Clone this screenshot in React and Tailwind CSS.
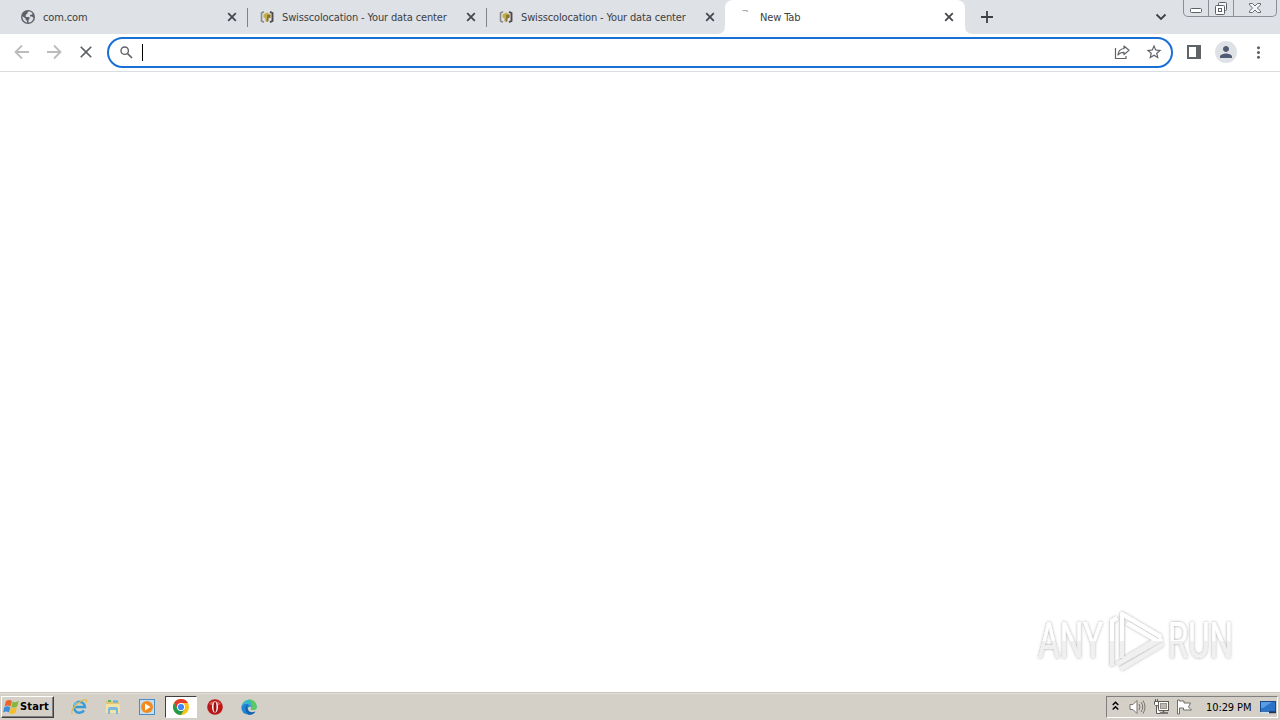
import { MdClose, MdMoreVert, MdPerson, MdStarBorder } from "react-icons/md";

const TABS = [
  { title: "com.com", icon: "globe" },
  { title: "Swisscolocation - Your data center", icon: "swiss" },
  { title: "Swisscolocation - Your data center", icon: "swiss" },
  { title: "New Tab", icon: "loading", active: true },
];

const GlobeIcon = () => (
  <svg width="14" height="14" viewBox="0 0 14 14">
    <circle cx="7" cy="7" r="7" fill="#5f6368" />
    <path d="M8 1.200Q6 2 6.500 3.500L5 4.500v1.300H3.800L5.500 7h3v2l-1 1v2.600A5.700 5.700 0 0 0 12.500 8L11 6.500H9V5l2-.5.500-1.200A6 6 0 0 0 8 1.200z" fill="#dee1e6" />
    <path d="M1.400 6.300A5.700 5.700 0 0 0 6 12.600V11L4.500 9.500V8.600z" fill="#dee1e6" />
  </svg>
);

const SwissIcon = () => (
  <svg width="14" height="14" viewBox="0 0 14 14" fill="none">
    <path d="M4 1.800L1.500 3v8L4 12.200" stroke="#8d8782" strokeWidth="1.500" />
    <path d="M10 1.800L12.500 3v8L10 12.200" stroke="#4e4a4c" strokeWidth="1.900" />
    <path d="M7 2.500L3.500 4.500v3L7 9l3.500-1.500v-3z" fill="#c3ae4c" />
    <path d="M7 5v7l1.500-1V8.500l2-1v-3z" fill="#8b7430" />
    <path d="M5.500 8L7 8.700V12l-1.500-1z" fill="#b19a38" />
  </svg>
);

const LoadingIcon = () => (
  <svg width="14" height="14" viewBox="0 0 14 14" fill="none">
    <path d="M4.500 .5Q8 0 10 1.500" stroke="#a9adb2" strokeWidth="1.400" />
  </svg>
);

const TabIcon = ({ icon }) => {
  if (icon === "globe") {
    return <GlobeIcon />;
  }
  if (icon === "swiss") {
    return <SwissIcon />;
  }
  return <LoadingIcon />;
};

const CloseIcon = () => (
  <svg width="10" height="10" viewBox="0 0 10 10">
    <path d="M1.200 1.200l7.600 7.600M8.800 1.200L1.200 8.800" stroke="#45494e" strokeWidth="1.800" />
  </svg>
);

const Tab = ({ title, icon, active, divider }) => (
  <div
    className={`relative flex h-[34px] shrink-0 items-center pl-[13px] ${
      active ? "w-[240px] rounded-t-lg bg-white" : "w-[239px]"
    }`}
  >
    {active && (
      <>
        <svg className="absolute bottom-0 -left-2" width="8" height="8">
          <path d="M8 0v8H0Q8 8 8 0z" fill="#fff" />
        </svg>
        <svg className="absolute -right-2 bottom-0" width="8" height="8">
          <path d="M0 0v8h8Q0 8 0 0z" fill="#fff" />
        </svg>
      </>
    )}
    <div className="flex size-[14px] shrink-0">
      <TabIcon icon={icon} />
    </div>
    <span className="ml-2 w-[184px] whitespace-nowrap pt-[2px] text-[11px] leading-[14px] tracking-[-0.14px] text-[#3c4043]">
      {title}
    </span>
    <CloseIcon />
    {divider && <div className="-mr-px ml-auto h-[19px] w-px shrink-0 bg-[#808489]" />}
  </div>
);

const WindowButtons = () => (
  <div className="flex h-[17px] w-[94px] self-start rounded-b-[5px] border border-t-0 border-[#8b8e94]">
    <div className="flex w-[25px] items-center justify-center border-r border-[#8b8e94]">
      <svg width="14" height="16" viewBox="0 0 14 16" fill="none">
        <rect x="1.500" y="8.500" width="11" height="4" rx="1" fill="#fff" stroke="#5c5f66" />
      </svg>
    </div>
    <div className="flex w-[25px] items-center justify-center border-r border-[#8b8e94]">
      <svg width="14" height="16" viewBox="0 0 14 16" fill="none" stroke="#5c5f66">
        <rect x="4.500" y="2.500" width="8" height="8" rx="1" fill="#f4f5f7" />
        <rect x="1.500" y="5.500" width="9" height="9" rx="1" fill="#fff" />
        <rect x="4.500" y="8.500" width="3" height="3" />
      </svg>
    </div>
    <div className="flex flex-1 items-center justify-center">
      <svg width="14" height="16" viewBox="0 0 14 16">
        <path
          d="M1.500 3.500h3L7 6l2.500-2.500h3v1.500L9.300 8l3.200 3v1.500h-3L7 10l-2.500 2.500h-3V11l3.200-3-3.200-3z"
          fill="#f4f5f7"
          stroke="#5c5f66"
          strokeWidth=".9"
        />
      </svg>
    </div>
  </div>
);

const TabStrip = () => (
  <div className="flex h-[34px] items-center bg-[#dee1e6] pr-[3px] pl-2">
    {TABS.map((tab, i) => (
      <Tab key={i} {...tab} divider={i < 2} />
    ))}
    <svg className="ml-4" width="12" height="12" viewBox="0 0 12 12">
      <path d="M6 0v12M0 6h12" stroke="#3c4043" strokeWidth="1.800" />
    </svg>
    <svg className="mr-[16px] ml-auto" width="12" height="8" viewBox="0 0 12 8" fill="none">
      <path d="M1.500 1.500L6 6l4.500-4.500" stroke="#3c4043" strokeWidth="1.800" />
    </svg>
    <WindowButtons />
  </div>
);

const ArrowIcon = ({ className }) => (
  <svg className={className} width="16" height="16" viewBox="0 0 16 16" fill="none">
    <path d="M15 8H2M8 1.500L1.500 8 8 14.500" stroke="#babcbe" strokeWidth="1.800" />
  </svg>
);

const Toolbar = () => (
  <div className="flex h-[38px] items-center border-b border-[#dadce0] bg-white pl-[14px]">
    <div className="flex w-[93px] shrink-0 items-center gap-4 pb-px">
      <ArrowIcon />
      <ArrowIcon className="rotate-180" />
      <MdClose className="-ml-[2px] size-[20px] shrink-0 text-[#5f6368]" />
    </div>
    <div className="flex h-[31px] w-[1066px] shrink-0 items-center rounded-full border-2 border-[#1a6fd4] pr-2 pl-[11px]">
      <svg className="mb-px" width="13" height="13" viewBox="0 0 13 13" fill="none" stroke="#5f6368">
        <circle cx="4.700" cy="4.700" r="3.700" strokeWidth="1.400" />
        <path d="M7.500 7.500l4.500 4.500" strokeWidth="1.700" />
      </svg>
      <div className="ml-[9px] h-[17px] w-px bg-black" />
      <svg className="mb-px ml-auto" width="16" height="16" viewBox="0 0 16 16" fill="none" stroke="#5f6368">
        <path d="M1.500 4v10.500h10.500V12" strokeWidth="1.200" />
        <path
          d="M10 2l5 4.300-5 4.300V8.300Q6 8.300 4 11 4.500 5 10 4.500z"
          strokeWidth="1.200"
          strokeLinejoin="round"
        />
      </svg>
      <MdStarBorder className="mb-px ml-[15px] size-[18px] text-[#5f6368]" />
    </div>
    <svg className="mb-px ml-[14px]" width="14" height="14" viewBox="0 0 14 14">
      <path d="M0 0h14v14H0zM2 2v10h7V2z" fill="#5f6368" fillRule="evenodd" />
    </svg>
    <div className="mb-px ml-[14px] flex size-[22px] items-center justify-center rounded-full bg-[#dee1e6]">
      <MdPerson className="size-[18px] text-[#4f5b73]" />
    </div>
    <MdMoreVert className="ml-[12px] size-[19px] shrink-0 text-[#5f6368]" />
  </div>
);

const Watermark = () => (
  <svg
    className="mb-[13px]"
    width="250"
    height="74"
    viewBox="0 0 250 74"
    fontFamily="Roboto, 'Liberation Sans', sans-serif"
    fontSize="50"
  >
    <defs>
      <linearGradient id="fade" x1="0" y1="0" x2="0" y2="74" gradientUnits="userSpaceOnUse">
        <stop offset="0.490" stopColor="#fff" />
        <stop offset="0.490" stopColor="#f0f0f0" />
      </linearGradient>
      <filter id="glow" x="-10%" y="-20%" width="120%" height="140%">
        <feDropShadow dx="0" dy="0" stdDeviation="1.600" floodColor="#000" floodOpacity=".36" />
      </filter>
    </defs>
    <g filter="url(#glow)" fill="url(#fade)">
      <text x="8" y="53" textLength="65" lengthAdjust="spacingAndGlyphs">
        ANY
      </text>
      <text x="138" y="53" textLength="65" lengthAdjust="spacingAndGlyphs">
        RUN
      </text>
    </g>
    <g filter="url(#glow)" fill="none" stroke="url(#fade)" strokeWidth="4" strokeLinejoin="round">
      <path d="M92 53V9L131 32" />
      <path d="M97 18L126 35 93 55" />
      <path d="M87 13l-5 3V61" />
      <path d="M87 59L132 34" />
      <path d="M91 64L133 39" />
    </g>
  </svg>
);

const StartButton = () => (
  <div className="flex h-[22px] w-[53px] items-center border border-t-white border-r-[#404040] border-b-[#404040] border-l-white bg-[#d4d0c8] pl-px shadow-[inset_-1px_-1px_#808080]">
    <svg className="shrink-0" width="17" height="16" viewBox="0 0 17 16">
      <path d="M3 2q3-2 6 0L7.500 7.500q-3-2-6 0z" fill="#e9652b" />
      <path d="M9.700 2.500q3 1.500 6-.5l-1.500 5.500q-3 2-6 .5z" fill="#83b83c" />
      <path d="M1.300 8.200q3-2 6 0L6 13.500q-3-2-6 0z" fill="#3b8ed8" />
      <path d="M8 8.800q3 1.500 6-.5l-1.500 5.500q-3 2-6 .5z" fill="#f6bd25" />
    </svg>
    <span className="pt-px text-[11px] leading-[14px] font-bold tracking-[0.15px] text-black">
      Start
    </span>
  </div>
);

const IeIcon = () => (
  <svg width="18" height="18" viewBox="0 0 18 18" fill="none">
    <path d="M14 12.500A5.500 5.500 0 1 1 15 9H4.500" stroke="#389bd8" strokeWidth="2.400" />
    <path d="M4.500 8.200q0-3 3-4" stroke="#7dcaf0" strokeWidth="1.200" />
    <path d="M2.500 16C-1 14 7 4 14 1.800q4-1 2 3" stroke="#e0bd50" strokeWidth="1.300" />
  </svg>
);

const ExplorerIcon = () => (
  <svg width="18" height="18" viewBox="0 0 18 18">
    <path d="M2 3h5l1 1h7v11H2z" fill="#e0c577" />
    <path d="M4 2h3v2H4z" fill="#5eb85b" />
    <path d="M9 2.500h5v2H9z" fill="#5aaee1" />
    <path d="M2 6h13l1 2v7H2z" fill="#f2e2a6" />
    <path d="M4 16v-5q0-2 2-2h6q2 0 2 2v5h-2v-4H6v4z" fill="#79b9df" />
  </svg>
);

const PlayerIcon = () => (
  <svg width="18" height="18" viewBox="0 0 18 18">
    <rect x="1.500" y="1.500" width="15" height="15" fill="#c4def3" stroke="#4c8cc5" />
    <circle cx="9" cy="9" r="6" fill="#f28b1c" />
    <path d="M7 5.500v7L12.500 9z" fill="#fff" />
  </svg>
);

const ChromeIcon = () => (
  <svg width="16" height="16" viewBox="0 0 16 16">
    <circle cx="8" cy="8" r="8" fill="#fbc116" />
    <path d="M8 8V4H14.930A8 8 0 0 0 1.070 4L4.540 10z" fill="#e33b2e" />
    <path d="M1.070 4A8 8 0 0 0 8 16L11.460 10H4.540z" fill="#249a4b" />
    <circle cx="8" cy="8" r="4" fill="#fff" />
    <circle cx="8" cy="8" r="3.100" fill="#4285f4" />
  </svg>
);

const OperaIcon = () => (
  <svg width="16" height="16" viewBox="0 0 16 16">
    <circle cx="8" cy="8" r="7.800" fill="#ba1717" />
    <path d="M2 5a7 6 0 0 1 12 0q-6 3-12 0" fill="#d95c53" />
    <ellipse cx="8" cy="8" rx="3" ry="5.500" fill="#fff" />
    <ellipse cx="8" cy="8" rx="1.500" ry="5" fill="#9c1010" />
  </svg>
);

const EdgeIcon = () => (
  <svg width="17" height="16" viewBox="0 0 17 16">
    <path d="M.3 8A7.800 7.800 0 0 1 15.800 7.500q.2 3.500-4 3.500-2 0-2-1Q11 6 7 5 2 4 .3 8z" fill="#36b8c5" />
    <path d="M7 .3A7.800 7.800 0 0 1 15.800 7.500q.2 3.500-4 3.500-2 0-2-1Q13 4 7 .3z" fill="#5cc964" />
    <path d="M.3 8Q2 4 7 5q3 .5 3 3Q8 6.500 7 9q-.5 4 3.500 5 2 .4 4-1.500Q12 16 8 15.800.3 15.300.3 8z" fill="#1f86d6" />
    <path d="M4.500 8Q5 6 7 5.500 5.500 8 6.500 10.500q2 4 8 2Q12 16 8 15.800 4 13.500 4.500 8z" fill="#1660b0" />
  </svg>
);

const Tray = () => (
  <div className="flex h-[22px] w-[172px] items-center border border-t-[#808080] border-r-white border-b-white border-l-[#808080] pl-[5px]">
    <svg className="mb-[2px]" width="7" height="10" viewBox="0 0 7 10" fill="none" stroke="#000" strokeWidth="1.500">
      <path d="M.7 4l2.800-2.700L6.300 4M.7 8.500l2.800-2.700 2.800 2.700" />
    </svg>
    <svg className="ml-[10px]" width="17" height="16" viewBox="0 0 17 16" fill="none" stroke="#77756f">
      <path d="M1 5.500h3l4-4v13l-4-4H1z" fill="#fff" />
      <path d="M10 5q2 3 0 6M12 3q3.500 5 0 10M14 1.500q4 6.500 0 13" />
    </svg>
    <svg className="ml-[7px]" width="17" height="16" viewBox="0 0 17 16" fill="none" stroke="#5e5c58">
      <rect x="5.500" y="2.500" width="10" height="9" fill="#fff" />
      <rect x="7.500" y="4.500" width="6" height="5" fill="#bcb9b3" stroke="#96938d" />
      <path d="M7 14h8M10.500 12v2" strokeWidth="1.500" />
      <path d="M1.500 2.500h4v3l-1 1h-2l-1-1zM2.500 0v2M4.500 0v2M3.500 7v7.500H7" fill="#fff" />
    </svg>
    <svg className="ml-[6px]" width="16" height="16" viewBox="0 0 16 16" fill="#fff" stroke="#716f6a">
      <path d="M1.500 1v14h2V9h4v2h8l-3-3 2-4H8V2H3.500V1z" />
    </svg>
    <span className="ml-[14px] whitespace-nowrap pt-[2px] text-[11px] leading-[14px] tracking-[-0.1px] text-black">
      10:29 PM
    </span>
    <svg className="mr-px ml-auto" width="16" height="14" viewBox="0 0 16 14">
      <rect x=".5" y="1.500" width="15" height="10" fill="#2b73c8" stroke="#174b8e" />
      <path d="M1 2h11L3 8H1z" fill="#5b9de1" />
      <path d="M1 12.500h8" stroke="#c6e1f4" strokeWidth="1.500" />
      <path d="M9 12.500h7" stroke="#24364e" strokeWidth="1.500" />
    </svg>
  </div>
);

const Taskbar = () => (
  <div className="flex h-[28px] items-center border-t border-[#c8c4bc] bg-[#d4d0c8] pr-[2px] pl-px shadow-[inset_0_1px_#e4e1da]">
    <StartButton />
    <div className="ml-4 flex w-[95px] shrink-0 gap-4">
      <IeIcon />
      <ExplorerIcon />
      <PlayerIcon />
    </div>
    <div className="flex h-[22px] w-[32px] items-center justify-center border border-t-[#404040] border-r-white border-b-white border-l-[#404040] bg-white">
      <ChromeIcon />
    </div>
    <div className="ml-[10px] flex items-center gap-[18px]">
      <OperaIcon />
      <EdgeIcon />
    </div>
    <div className="ml-auto">
      <Tray />
    </div>
  </div>
);

const App = () => (
  <div className="flex h-[720px] w-[1280px] flex-col overflow-hidden bg-white font-['DejaVu_Sans_Condensed','DejaVu_Sans',sans-serif]">
    <TabStrip />
    <Toolbar />
    <div className="flex flex-1 items-end justify-end">
      <Watermark />
    </div>
    <Taskbar />
  </div>
);

export default App;
